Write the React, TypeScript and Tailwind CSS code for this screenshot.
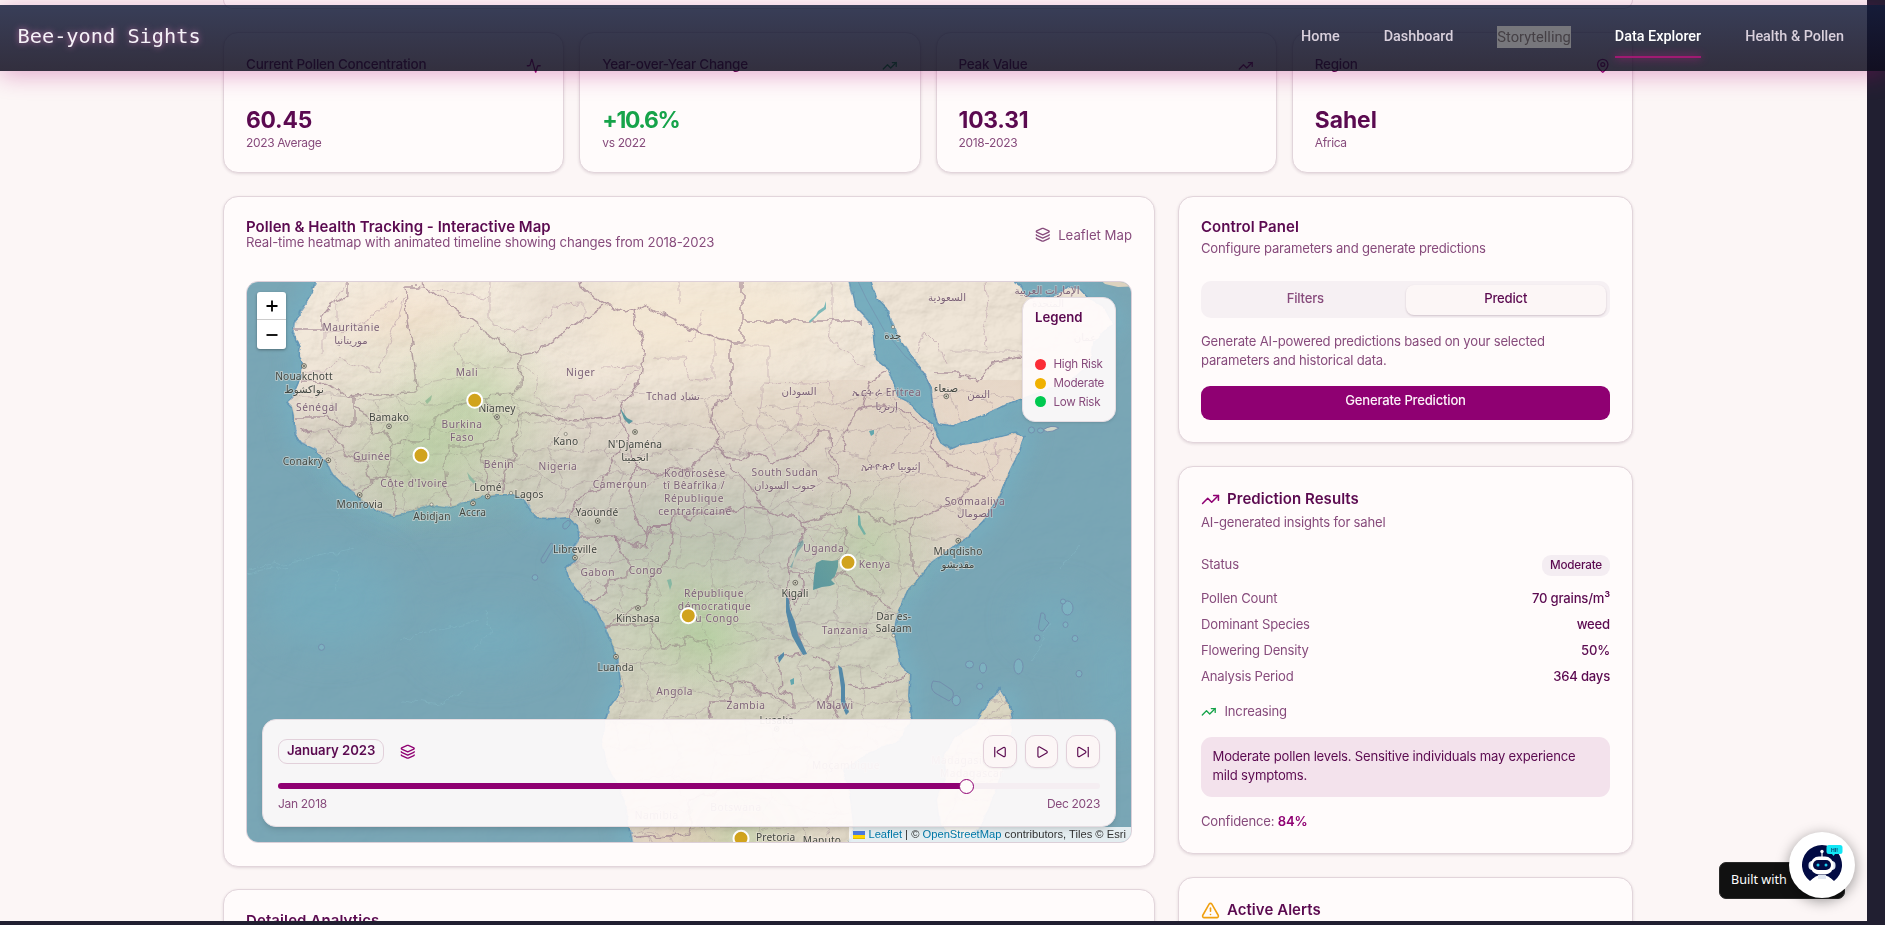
import React from "react";
import { Activity, Layers, MapPin, Play, SkipBack, SkipForward, TrendingUp, TriangleAlert } from "lucide-react";

type Pt = [number, number];
const poly = (s: string): string => "M" + s.trim().split(/\s+/).join("L");

const AFRICA = poly(
  "316,270 316,282 313,292 307,302 300,312 300,316 294,323 293,332 297,338 301,347 300,355 303,363 302,373 299,383 295,392 292,398 288,402 293,407 295,417 295,425 296,435 302,443 315,449 320,455 327,462 332,473 345,485 360,498 377,510 394,516 412,510 430,505 447,507 462,503 480,496 497,494 513,494 523,498 531,510 537,517 552,518 568,517 578,525 580,538 574,547 577,560 566,569 572,583 583,597 597,610 603,622 605,628 613,643 618,660 620,673 622,687 618,697 610,707 607,717 602,740 608,767 620,787 627,810 630,830 634,850 846,850 853,825 850,800 843,770 870,752 900,740 911,718 908,697 909,675 900,665 897,647 893,633 898,610 907,590 918,578 930,563 950,548 967,537 983,520 998,497 1008,473 1018,453 1023,437 1015,434 993,439 977,443 963,445 950,450 940,443 935,433 933,425 922,418 907,402 897,397 893,383 888,370 875,360 873,340 872,325 863,315 855,307 853,297 846,270"
);
const ARABIA = poly(
  "868,270 872,282 877,297 887,307 892,323 900,338 913,357 923,370 932,387 933,403 938,423 953,425 967,420 987,413 1007,403 1022,398 1045,390 1067,383 1090,363 1093,343 1112,323 1103,307 1087,298 1078,288 1068,287 1058,295 1042,299 1028,297 1022,292 1019,286 1014,282 1014,270"
);
const MADAGASCAR = poly(
  "1000,690 1005,698 1010,710 1012,720 1010,745 1001,773 990,805 980,827 965,838 950,835 940,823 937,800 947,777 944,755 955,738 975,725 983,713 988,703"
);

const BORDERS: string[] = [
  "293,329 321,329 321,317 331,305 347,296 347,275",
  "421,287 404,287 417,393 377,394 353,395 348,398 335,388 320,382 301,382",
  "418,281 450,305 503,343 510,355 521,355 537,352 570,329 603,305 590,294 582,287 580,275",
  "603,305 614,308 625,314 635,311 637,327 644,342 641,380 630,394 620,407 618,417 597,420 573,422 553,418 533,413 520,415 513,440 515,455 505,470 504,494",
  "521,355 520,387 515,395 487,397 463,403 433,418 428,437 420,443 393,442 384,430 374,434 364,412 353,406 353,395",
  "487,397 492,410 503,428 497,440 480,445 447,445 445,463 447,485 450,505",
  "480,445 484,465 486,480 487,496",
  "635,311 645,305 672,319 700,333 731,345 731,392 715,403 712,423 720,445 727,458 740,458 752,452 765,457 773,462 793,455 808,448 820,432 829,432 830,453 838,462 838,472 828,478",
  "742,275 742,344 731,344",
  "742,321 863,321",
  "885,372 870,380 863,407 857,410 847,430 842,453",
  "863,407 880,405 897,407 920,420 930,430",
  "933,433 932,445 947,465 985,477 957,502 913,519 912,527 912,570 918,578",
  "913,519 890,524 868,514 858,512 850,505 848,490 828,478",
  "727,458 715,445 690,468 668,470 650,476 636,465 625,430 618,417",
  "620,445 608,470 600,490 580,495 568,517",
  "636,465 629,500 636,520 648,535",
  "648,539 650,525 673,525 676,513 690,518 720,512 745,507 765,508 778,515 793,515 802,523 838,513 850,505",
  "728,465 747,483 757,500 765,508",
  "673,525 668,560 650,581 647,603 637,608 620,618 605,625",
  "580,538 615,538 627,558 627,577 607,580 607,590 593,603",
  "615,540 647,547 653,525 673,525",
  "605,625 652,625 663,648 682,647 683,637 708,640 709,657 713,680 732,683 747,682 763,695 780,697 793,707 793,695 780,690 778,657 803,653",
  "802,523 803,540 790,557 787,595 792,620 806,655",
  "800,573 813,573 840,573 877,597 893,610",
  "845,528 848,548 838,560",
  "847,685 867,688 890,684 909,673",
  "732,683 732,702 709,702 710,720",
  "813,656 833,667 828,700 840,718",
  "787,595 795,603 803,590 800,573 790,573",
  "295,418 325,418 340,425 353,428 353,406",
  "315,430 297,432",
  "330,430 345,455 365,462 372,480 360,497",
  "388,475 394,495 394,516",
  "372,480 388,475 392,442",
  "935,373 960,373 977,380 993,362 1022,357",
  "602,840 690,833 690,800 720,790",
];

const MINOR: string[] = [
  "347,282 336,300 336,320",
  "400,297 350,330 323,331 323,355",
  "404,300 378,375 340,358 323,372 300,372",
  "490,282 490,325 530,332 560,305 583,304 583,325",
  "474,325 453,345 465,365 500,368 516,366",
  "421,287 490,298",
  "465,378 440,382 415,386",
  "521,362 538,378 535,395 548,410",
  "603,367 640,366 602,398 580,396 560,412",
  "653,358 684,358 690,378 712,380",
  "680,282 680,303",
  "683,345 695,340 702,310",
  "742,345 768,345 768,382 762,384 762,400",
  "832,282 832,321 830,340 845,352 865,370",
  "762,382 810,383 830,380 832,400 850,410",
  "714,378 714,340",
  "986,282 988,310 983,330 987,350",
  "917,350 925,330 940,345 945,362",
  "950,352 1022,352",
  "762,400 757,430 770,445 775,455",
  "800,400 797,430 808,445",
  "997,442 998,462 985,477",
  "803,530 815,526 828,524 845,530",
  "808,535 818,545 812,558 798,560",
  "828,524 826,540 834,552",
];

function rng(seed: number) {
  let s = seed;
  return () => {
    s = (s * 16807) % 2147483647;
    return s / 2147483647;
  };
}

function districtMesh(): string {
  const r = rng(42);
  const cw = 31;
  const ch = 27;
  const cols = 27;
  const rows = 20;
  const p: Pt[][] = [];
  for (let y = 0; y < rows; y++) {
    const row: Pt[] = [];
    for (let x = 0; x < cols; x++) {
      row.push([270 + x * cw + (y % 2) * 15 + (r() - 0.5) * 20, 400 + y * ch + (r() - 0.5) * 17]);
    }
    p.push(row);
  }
  let d = "";
  for (let y = 0; y < rows - 1; y++) {
    for (let x = 0; x < cols - 1; x++) {
      const [ax, ay] = p[y][x];
      const [bx, by] = p[y][x + 1];
      const [cx, cy] = p[y + 1][x];
      if (r() > 0.15) d += `M${ax.toFixed(1)},${ay.toFixed(1)}L${bx.toFixed(1)},${by.toFixed(1)}`;
      if (r() > 0.2) d += `M${ax.toFixed(1)},${ay.toFixed(1)}L${cx.toFixed(1)},${cy.toFixed(1)}`;
    }
  }
  return d;
}
const MESH = districtMesh();

const COUNTRIES: [string, number, number][] = [
  ["Mauritanie", 351.3, 327], ["موريتانيا", 351, 340], ["Mali", 467, 372], ["Niger", 580.7, 372],
  ["Sénégal", 317, 407], ["Burkina", 462, 424.5], ["Faso", 462, 437], ["Guinée", 371.7, 456], ["Bénin", 499, 464],
  ["Nigeria", 558, 466.7], ["Côte d'Ivoire", 414, 483], ["Cameroun", 620, 484], ["Tchad تشاد", 673, 396],
  ["Kodorosêse", 695, 473], ["tî Bêafrîka /", 694, 485.7], ["République", 694, 498.5], ["centrafricaine", 695, 511],
  ["السعودية", 947, 297], ["السودان", 799, 391], ["ኤርትራ Eritrea", 886.7, 392.7], ["إرتريا", 886.7, 406],
  ["اليمن", 978.7, 394], ["الإمارات العربية", 1047, 290], ["المتحدة", 1048, 303], ["عمان", 1085, 337],
  ["South Sudan", 785, 472.5], ["جنوب السودان", 785, 485.7], ["ኢትዮጵያ إثيوبيا", 890.7, 466], ["Soomaaliya", 975, 501],
  ["الصومال", 975, 513.5], ["Gabon", 597.7, 572.5], ["Congo", 645.7, 570.5], ["Angola", 674.7, 691], ["Namibia", 656.7, 815],
  ["Uganda", 823.7, 548.5], ["Kenya", 874.7, 564.5], ["Tanzania", 845, 630.5], ["Zambia", 746, 705], ["Malawi", 835, 705],
  ["Moçambique", 846, 765], ["Madagasikara /", 972, 760], ["Madagascar", 972, 773], ["Botswana", 736, 807],
  ["République", 714, 593.5], ["démocratique", 714.6, 606], ["du Congo", 714, 618.5],
];
const CITIES: [string, number, number][] = [
  ["Nouakchott", 304, 376], ["نواكشوط", 304, 389], ["Bamako", 389, 417.5], ["Niamey", 497, 408], ["Kano", 565.7, 441],
  ["N'Djaména", 635, 444.5], ["انجمينا", 635, 457], ["Conakry", 303, 461], ["Lomé", 488, 487.5], ["Lagos", 529, 494],
  ["Monrovia", 359.7, 504.5], ["Abidjan", 432, 516], ["Accra", 472.7, 512.5], ["Yaoundé", 597, 512], ["جدة", 892.7, 335],
  ["صنعاء", 946, 388], ["Libreville", 575, 549], ["Kinshasa", 638, 618], ["Luanda", 615.7, 667], ["Muqdisho", 958, 551],
  ["مقديشو", 958, 564], ["Kigali", 795, 593.5], ["Dar es-", 893.7, 616], ["Salaam", 893.7, 628.5], ["Lusaka", 776.7, 720],
  ["Pretoria", 775.7, 837.5], ["Maputo", 822, 840],
];
const CAPITALS: Pt[] = [
  [304, 366], [389, 426.3], [497, 417], [635, 432], [328.3, 460.3], [487.7, 496.5], [359.7, 495], [473, 503.3], [597.7, 521],
  [946.3, 396.3], [575, 557.7], [638, 608], [616, 656.7], [958.3, 540.7], [795.3, 582.7], [776.7, 729],
];
const TOWNS: Pt[] = [[565.7, 434], [511, 493], [431.5, 504.5], [893, 327], [893.5, 635.5]];
const MARKERS: Pt[] = [[474.7, 400.3], [421, 455.3], [688.3, 615.7], [848, 562.3], [741, 838.3]];
const ISLANDS: [number, number, number, number][] = [
  [535, 577.5, 2.8, 2.8], [321.5, 647.3, 3, 3], [969.5, 664.5, 4, 3.5], [983, 668, 3.5, 5], [1018.5, 666.5, 4.5, 7.5],
  [979.7, 686.3, 3, 3], [1067.5, 608, 5.5, 7], [1063, 601.5, 2.5, 2.5], [1065.5, 624.7, 2.5, 2.8], [1037.3, 638, 2.8, 3],
  [1075, 638.5, 2.8, 3], [1079, 673.7, 3, 3.3], [956.3, 700.5, 4, 5], [1031.5, 430, 3, 3], [1040.5, 430.5, 3, 2.5],
];

function MapCanvas() {
  return (
    <svg viewBox="247 282 884 560" className="block h-full w-full" preserveAspectRatio="none">
      <defs>
        <linearGradient id="sand" x1="0" y1="282" x2="0" y2="842" gradientUnits="userSpaceOnUse">
          <stop offset="0" stopColor="#f0e3d0" />
          <stop offset="0.17" stopColor="#eadcc9" />
          <stop offset="0.25" stopColor="#d6cab8" />
          <stop offset="0.36" stopColor="#c3beab" />
          <stop offset="0.48" stopColor="#b9bba8" />
          <stop offset="0.66" stopColor="#c2c3aa" />
          <stop offset="0.8" stopColor="#c9c5ac" />
          <stop offset="1" stopColor="#d5c9b2" />
        </linearGradient>
        <linearGradient id="east" x1="800" y1="560" x2="960" y2="430" gradientUnits="userSpaceOnUse">
          <stop offset="0" stopColor="#dacbb9" stopOpacity="0" />
          <stop offset="1" stopColor="#e2d1c0" stopOpacity="0.95" />
        </linearGradient>
        <radialGradient id="heat">
          <stop offset="0" stopColor="#9ccc86" stopOpacity="0.34" />
          <stop offset="0.5" stopColor="#a8cc90" stopOpacity="0.17" />
          <stop offset="1" stopColor="#aecb9a" stopOpacity="0" />
        </radialGradient>
        <filter id="jag" x="-5%" y="-5%" width="110%" height="110%">
          <feTurbulence type="fractalNoise" baseFrequency="0.075" numOctaves="3" seed="7" result="n" />
          <feDisplacementMap in="SourceGraphic" in2="n" scale="11" xChannelSelector="R" yChannelSelector="G" />
        </filter>
        <filter id="coast" x="-5%" y="-5%" width="110%" height="110%">
          <feTurbulence type="fractalNoise" baseFrequency="0.11" numOctaves="3" seed="3" result="n" />
          <feDisplacementMap in="SourceGraphic" in2="n" scale="5" xChannelSelector="R" yChannelSelector="G" />
        </filter>
        <filter id="relief" x="0" y="0" width="100%" height="100%">
          <feTurbulence type="fractalNoise" baseFrequency="0.022 0.03" numOctaves="5" seed="11" />
          <feDiffuseLighting surfaceScale="5" diffuseConstant="1.1" lightingColor="#ffffff">
            <feDistantLight azimuth="225" elevation="55" />
          </feDiffuseLighting>
        </filter>
        <filter id="soft12" x="-20%" y="-20%" width="140%" height="140%"><feGaussianBlur stdDeviation="9" /></filter>
        <filter id="soft30" x="-50%" y="-50%" width="200%" height="200%"><feGaussianBlur stdDeviation="18" /></filter>
        <clipPath id="land">
          <path d={AFRICA + "Z"} />
          <path d={ARABIA + "Z"} />
          <path d={MADAGASCAR + "Z"} />
        </clipPath>
      </defs>

      <rect x="247" y="282" width="884" height="560" fill="#74a2b2" />
      <g filter="url(#soft12)" fill="none" stroke="#6fb0c4" strokeWidth="24" opacity="0.5">
        <path d={AFRICA} />
        <path d={ARABIA} />
        <path d={MADAGASCAR} />
      </g>
      <g filter="url(#soft30)" fill="#70abbe" opacity="0.6">
        <ellipse cx="330" cy="600" rx="70" ry="50" />
        <ellipse cx="490" cy="640" rx="60" ry="30" />
        <ellipse cx="1115" cy="680" rx="20" ry="60" />
        <ellipse cx="1055" cy="620" rx="35" ry="25" />
      </g>
      <rect x="247" y="282" width="884" height="560" filter="url(#relief)" opacity="0.1" className="mix-blend-soft-light" />

      <g filter="url(#coast)">
        <g fill="none" stroke="#5c8fb4" strokeWidth="3.2" opacity="0.7">
          <path d={AFRICA + "Z"} />
          <path d={ARABIA + "Z"} />
          <path d={MADAGASCAR + "Z"} />
        </g>
        <g fill="url(#sand)">
          <path d={AFRICA + "Z"} />
          <path d={ARABIA + "Z"} fill="#e9dcc8" />
          <path d={MADAGASCAR + "Z"} fill="#cdc6ab" />
        </g>
      </g>
      <path d="M1095,275L1105,284L1118,287L1140,286L1140,275Z" fill="#dcd2bf" />

      <g clipPath="url(#land)">
        <rect x="800" y="380" width="240" height="230" fill="url(#east)" />
        <g filter="url(#soft30)">
          <ellipse cx="700" cy="320" rx="120" ry="40" fill="#f3e4cc" opacity="0.8" />
          <ellipse cx="560" cy="300" rx="45" ry="22" fill="#dbcfbd" opacity="0.7" />
          <ellipse cx="410" cy="320" rx="60" ry="22" fill="#f2dcc4" opacity="0.8" />
          <ellipse cx="760" cy="412" rx="80" ry="22" fill="#e0d0bc" opacity="0.7" />
          <ellipse cx="690" cy="535" rx="90" ry="40" fill="#b3b9a6" opacity="0.7" />
          <ellipse cx="890" cy="420" rx="40" ry="30" fill="#d2c5b4" opacity="0.6" />
          <ellipse cx="690" cy="842" rx="50" ry="20" fill="#dfbfa3" opacity="0.6" />
        </g>
        <rect x="247" y="282" width="884" height="560" filter="url(#relief)" opacity="0.28" className="mix-blend-soft-light" />
        <g filter="url(#jag)" fill="none">
          <path d={MESH} stroke="#a18995" strokeWidth="0.8" opacity="0.5" />
          {MINOR.map((b, i) => (
            <path key={i} d={poly(b)} stroke="#b99aa8" strokeWidth="0.8" opacity="0.7" />
          ))}
          {BORDERS.map((b, i) => (
            <path key={i} d={poly(b)} stroke="#9f8090" strokeWidth="1.4" opacity="0.75" />
          ))}
        </g>
      </g>

      <g fill="#5b979f">
        <path d="M816,563L822,560L832,561L838,560L838,567L835,576L831,580L835,584L830,586L822,587L816,589L813,590L814,576Z" />
        <path d="M786,594L789,600L790,610L795,622L798,635L803,645L807,654L803,655L797,645L792,636L789,625L786,612Z" fill="#5489a8" />
        <path d="M838,665L842,668L845,685L845,700L849,712L846,715L841,703L841,688Z" fill="#5489a8" />
        <path d="M858,515L860,516L861,525L866,534L864,535L858,525Z" fill="#63a7ae" />
        <path d="M778,657L784,652L784,656L779,663Z" fill="#5489a8" />
        <path d="M620,408L627,418L633,421L629,424L624,419Z" />
        <path d="M809,321L816,315L818,311L824,307L826,301L826,309L819,314L810,323Z" fill="#7db9b8" />
        <path d="M869,431L874,430L874,434L871,436Z" fill="#63a7ae" />
        <path d="M425,401L432,395L431,400L427,404Z" fill="#93b6a0" />
        <path d="M467,472L472,478L476,482L474,484L469,479Z" fill="#86b3aa" />
        <path d="M792,568L798,543L803,540L804,544L798,552L790,567Z" opacity="0.6" />
        <path d="M667,580L671,579L672,584L670,590Z" fill="#7fb2a8" />
        <path d="M790,680L794,678L794,684L791,685Z" fill="#63a7ae" />
      </g>

      <g fill="none" stroke="#6f83a8" strokeWidth="0.9" opacity="0.8">
        {ISLANDS.map(([x, y, rx, ry], i) => (
          <ellipse key={i} cx={x} cy={y} rx={rx} ry={ry} fill="#7fb5c4" />
        ))}
        <path d="M568,520q4,2 1,6t-5,3t-1,-5z" />
        <path d="M551,543q4,1 2,5l-8,14q-4,3 -4,-3z" />
        <path d="M940,682l12,8q4,6 -3,11l-14,-8q-6,-5 -2,-12z" />
        <path d="M1041,613q5,-1 4,6l4,4l-6,8q-6,0 -4,-7z" />
        <path d="M1043,430q8,-6 16,-2l-6,3q-6,2 -10,-1z" fill="#e6e1cf" />
        <path d="M855,275L867,300L884,330L905,356L924,372L930,388L936,420" opacity="0.6" />
      </g>
      <g stroke="#8cc0cd" strokeWidth="0.8" fill="none" opacity="0.45" filter="url(#jag)">
        <path d="M247,570L300,560L355,550" />
        <path d="M247,574L290,566" />
        <path d="M400,640L440,630L480,620M475,650L490,630L486,610" />
        <path d="M400,700L440,705L465,690" />
        <path d="M1060,570L1080,545M1030,660L1045,640L1050,620" />
        <path d="M335,570L338,590" />
      </g>

      <ellipse cx="447" cy="428" rx="150" ry="130" fill="url(#heat)" opacity="0.7" />
      <circle cx="474.7" cy="400.3" r="85" fill="url(#heat)" />
      <circle cx="421" cy="455.3" r="80" fill="url(#heat)" />
      <circle cx="688.3" cy="615.7" r="95" fill="url(#heat)" />
      <circle cx="710" cy="640" r="60" fill="url(#heat)" />
      <circle cx="870" cy="545" r="75" fill="url(#heat)" />
      <circle cx="741" cy="838.3" r="75" fill="url(#heat)" />

      <g textAnchor="middle" fontFamily="'Noto Sans','DejaVu Sans',sans-serif" fontSize="10.2">
        {COUNTRIES.map(([t, x, y], i) => (
          <text key={i} x={x} y={y + 3.6} fill="#7d6379" letterSpacing={/[a-z]/.test(t) ? 0.55 : 0} stroke="#efe6dc" strokeOpacity="0.4" strokeWidth="1.6" paintOrder="stroke">
            {t}
          </text>
        ))}
        {CITIES.map(([t, x, y], i) => (
          <text key={i} x={x} y={y + 3.6} fill="#434843" letterSpacing={/[a-z]/.test(t) ? 0.15 : 0} stroke="#efe6dc" strokeOpacity="0.5" strokeWidth="1.8" paintOrder="stroke">
            {t}
          </text>
        ))}
      </g>
      {CAPITALS.map(([x, y], i) => (
        <g key={i}>
          <circle cx={x} cy={y} r="2.4" fill="#d9d6c6" stroke="#55564c" strokeWidth="0.8" />
          <circle cx={x} cy={y} r="0.9" fill="#55564c" />
        </g>
      ))}
      {TOWNS.map(([x, y], i) => (
        <circle key={i} cx={x} cy={y} r="1.6" fill="#e9e5d9" stroke="#77766c" strokeWidth="0.7" />
      ))}
      {MARKERS.map(([x, y], i) => (
        <circle key={i} cx={x} cy={y} r="7.5" fill="#d1a31d" stroke="#fff" strokeWidth="2" />
      ))}
    </svg>
  );
}

const card = "border border-[#e2d5db] bg-[#fffbfb] shadow-[0_1px_3px_rgba(60,20,50,0.14)] rounded-[15px]";

function StatCard({ title, value, note, tone, icon }: { title: string; value: string; note: string; tone: string; icon: React.ReactNode }) {
  return (
    <div className={`${card} h-[141px] flex-1 px-[22px] pt-[21px]`}>
      <div className="flex h-[20px] items-center justify-between text-[13.5px] font-medium tracking-[-0.26px] text-[#5b0a50]">
        <span>{title}</span>
        {icon}
      </div>
      <div className={`mt-[32px] text-[22.8px] leading-[28px] font-bold ${tone}`}>{value}</div>
      <div className="text-[12px] leading-[17px] tracking-[-0.35px] text-[#874b7c]">{note}</div>
    </div>
  );
}

function Row({ label, value }: { label: string; value: string }) {
  return (
    <div className="flex h-[26px] items-center justify-between">
      <span>{label}</span>
      <span className="font-medium text-[#5b0a50]">{value}</span>
    </div>
  );
}

function MapCard() {
  return (
    <section className={`${card} h-[671px] px-[22px] pt-[22px]`}>
      <div className="flex h-[62px] items-start justify-between">
        <div>
          <h2 className="text-[15px] leading-[15px] font-semibold tracking-[0.02px] text-[#5b0a50]">Pollen &amp; Health Tracking - Interactive Map</h2>
          <p className="text-[13.2px] leading-[17px] tracking-[-0.14px] text-[#874b7c]">Real-time heatmap with animated timeline showing changes from 2018-2023</p>
        </div>
        <div className="mt-[6px] flex items-center gap-[8px] text-[13.2px] leading-[20px] text-[#874b7c]">
          <Layers size={15.5} />
          <span>Leaflet Map</span>
        </div>
      </div>
      <div className="relative h-[562px] w-[886px] overflow-hidden rounded-[12px] border border-[#dccfd8]">
        <MapCanvas />
        <div className="absolute top-[10px] left-[10px] flex w-[29px] flex-col rounded-[3px] bg-white text-black shadow-[0_1px_3px_rgba(0,0,0,0.35)]">
          <button className="flex h-[28px] items-center justify-center border-b border-[#ccc]">
            <svg width="12" height="12" viewBox="0 0 12 12"><path d="M6 0.5V11.5M0.5 6H11.5" stroke="#000" strokeWidth="1.8" /></svg>
          </button>
          <button className="flex h-[29px] items-center justify-center">
            <svg width="12" height="12" viewBox="0 0 12 12"><path d="M0.5 6H11.5" stroke="#000" strokeWidth="1.8" /></svg>
          </button>
        </div>
        <div className="absolute top-[15px] right-[15px] h-[125px] w-[94px] rounded-[13px] border border-[#e6dde2] bg-[#fffbfb]/94 px-[12px] pt-[9px] shadow-sm">
          <div className="mb-[28px] text-[13.2px] leading-[20px] font-semibold text-[#5b0a50]">Legend</div>
          <div className="flex flex-col text-[11.6px] leading-[18.8px] tracking-[-0.25px] whitespace-nowrap text-[#874b7c]">
            <div className="flex items-center gap-[7.5px]"><span className="size-[11px] shrink-0 rounded-full bg-[#fb2c36]" />High Risk</div>
            <div className="flex items-center gap-[7.5px]"><span className="size-[11px] shrink-0 rounded-full bg-[#f0b100]" />Moderate</div>
            <div className="flex items-center gap-[7.5px]"><span className="size-[11px] shrink-0 rounded-full bg-[#00c950]" />Low Risk</div>
          </div>
        </div>
        <div className="absolute right-0 bottom-0 flex h-[15px] items-center bg-white/80 pr-[5px] pl-[4px] font-['Liberation_Sans',sans-serif] text-[11.2px] whitespace-pre text-[#333]">
          <svg width="12" height="8" viewBox="0 0 12 8" className="mr-[3.5px]"><path fill="#4C7BE1" d="M0 0h12v4H0z" /><path fill="#FFD500" d="M0 4h12v3H0z" /><path fill="#E0BC00" d="M0 7h12v1H0z" /></svg>
          <span className="text-[#0078a8]">Leaflet</span> | © <span className="text-[#0078a8]">OpenStreetMap</span> contributors, Tiles © Esri
        </div>
        <div className="absolute right-[15px] bottom-[15px] left-[15px] h-[108px] rounded-[14px] border border-[#e6dde2] bg-[#fffbfb]/94 px-[15px] pt-[15px] shadow-md">
          <div className="flex h-[33px] items-center">
            <span className="flex h-[25px] items-center rounded-[9px] border border-[#e2d0da] px-[8px] pb-px text-[13.2px] font-semibold tracking-[-0.06px] text-[#5b0a50]">January 2023</span>
            <Layers size={15.5} className="ml-[16px] text-[#8f0072]" />
            <div className="ml-auto flex gap-[8px] text-[#5b0a50]">
              <button className="flex h-[33px] w-[34px] items-center justify-center rounded-[10px] border border-[#e2d0da] bg-[#fcf6f6] shadow-xs"><SkipBack size={14} /></button>
              <button className="flex h-[33px] w-[33px] items-center justify-center rounded-[10px] border border-[#e2d0da] bg-[#fcf6f6] shadow-xs"><Play size={14} /></button>
              <button className="flex h-[33px] w-[34px] items-center justify-center rounded-[10px] border border-[#e2d0da] bg-[#fcf6f6] shadow-xs"><SkipForward size={14} /></button>
            </div>
          </div>
          <div className="mt-[15px] flex h-[6px] items-center rounded-full bg-[#f5eef2]">
            <div className="h-[6px] w-[682px] rounded-l-full bg-[#8f0072]" />
            <div className="-ml-[1px] size-[15px] rounded-full border border-[#8f0072] bg-[#fffbfb]" />
          </div>
          <div className="mt-[6px] flex justify-between text-[12px] leading-[17px] tracking-[-0.3px] text-[#874b7c]">
            <span>Jan 2018</span>
            <span>Dec 2023</span>
          </div>
        </div>
      </div>
    </section>
  );
}

function Sidebar() {
  return (
    <div className="flex w-[455px] shrink-0 flex-col gap-[23px] text-[13.1px] tracking-[-0.2px] text-[#874b7c]">
      <section className={`${card} h-[247px] shrink-0 px-[22px] pt-[21px]`}>
        <h2 className="text-[15px] leading-[17px] font-semibold tracking-[0.05px] text-[#5b0a50]">Control Panel</h2>
        <p className="mt-[3px] leading-[20px]">Configure parameters and generate predictions</p>
        <div className="mt-[23px] flex h-[37px] rounded-[10px] bg-[#f6f0f3] p-[4px] pb-[3px] font-medium">
          <button className="flex flex-1 items-center justify-center pb-[3px] text-[#874b7c]">Filters</button>
          <button className="flex flex-1 items-center justify-center rounded-[8px] bg-[#fcf6f6] pb-[3px] text-[#5b0a50] shadow-[0_1px_2px_rgba(60,20,50,0.2)]">Predict</button>
        </div>
        <p className="mt-[14px] leading-[19.3px]">Generate AI-powered predictions based on your selected<br />parameters and historical data.</p>
        <button className="mt-[15px] flex h-[34px] w-full items-center justify-center rounded-[9px] bg-[#8f0072] pb-[3px] font-medium text-[#fdf2f9]">Generate Prediction</button>
      </section>

      <section className={`${card} h-[388px] shrink-0 px-[22px] pt-[21px]`}>
        <h2 className="flex items-center gap-[7px] text-[15px] leading-[22px] font-semibold tracking-[0.05px] text-[#5b0a50]">
          <TrendingUp size={19} className="text-[#8f0072]" />
          Prediction Results
        </h2>
        <p className="mt-[2px] leading-[20px]">AI-generated insights for sahel</p>
        <div className="mt-[22px] mb-[10px] flex h-[22px] items-center justify-between">
          <span className="pb-px">Status</span>
          <span className="rounded-[9px] bg-[#f4edf2] px-[8px] text-[11.7px] leading-[21px] font-medium text-[#5b0a50]">Moderate</span>
        </div>
        <Row label="Pollen Count" value="70 grains/m³" />
        <Row label="Dominant Species" value="weed" />
        <Row label="Flowering Density" value="50%" />
        <Row label="Analysis Period" value="364 days" />
        <div className="mt-[12px] flex h-[20px] items-center gap-[8px]">
          <TrendingUp size={15.5} className="text-[#16a34a]" />
          Increasing
        </div>
        <div className="mt-[15px] h-[60px] rounded-[11px] bg-[#f3e2ec] px-[11.5px] pt-[10px] leading-[19.3px] whitespace-nowrap text-[#5b0a50]">
          Moderate pollen levels. Sensitive individuals may experience<br />mild symptoms.
        </div>
        <p className="mt-[14px] leading-[20px]">Confidence: <span className="font-semibold text-[#8f0072]">84%</span></p>
      </section>

      <section className={`${card} h-[160px] shrink-0 px-[22px] pt-[21px]`}>
        <h2 className="flex items-center gap-[7px] text-[15px] leading-[22px] font-semibold tracking-[0.05px] text-[#5b0a50]">
          <TriangleAlert size={19} className="text-[#f0a010]" />
          Active Alerts
        </h2>
      </section>
    </div>
  );
}

function NavBar() {
  return (
    <header className="absolute top-[5px] left-0 flex h-[66px] w-full items-center justify-between bg-linear-to-b from-[rgba(19,27,58,0.84)] to-[rgba(15,12,30,0.85)] pr-[41px] pb-[3px] pl-[17.500px] font-['Roboto',sans-serif] shadow-[0_4px_24px_rgba(175,0,115,0.32)]">
      <div className="font-['DejaVu_Sans_Mono',monospace] text-[20.3px] leading-none text-[#f6f2f8] [text-shadow:0_0_6px_rgba(240,130,200,0.75)]">Bee-yond Sights</div>
      <nav className="flex items-center gap-[44px] text-[14.4px] leading-[22px] font-medium text-[#d9d0dc]">
        <a>Home</a>
        <a>Dashboard</a>
        <a className="bg-[#77777c] text-[14.7px] font-normal text-[#454045]">Storytelling</a>
        <a className="relative text-white">
          Data Explorer
          <span className="absolute -bottom-[10px] left-0 h-[2px] w-full bg-[#a01a72] shadow-[0_0_8px_#c01a85]" />
        </a>
        <a>Health &amp; Pollen</a>
      </nav>
    </header>
  );
}

function ChatBot() {
  return (
    <>
      <div className="absolute top-[862px] left-[1719px] flex h-[37px] w-[126px] items-center rounded-[7px] border border-[#2a2a2a] bg-[#111] pl-[11px] font-['Noto_Sans',sans-serif] text-[12.6px] text-white">Built with</div>
      <div className="absolute top-[832px] left-[1789px] flex size-[66px] items-center justify-center rounded-full bg-white shadow-[0_3px_14px_rgba(0,0,0,0.4)]">
        <svg width="42" height="42" viewBox="0 0 42 42">
          <path d="M9 37A20 20 0 1 1 33 37Q28 32 21 32T9 37Z" fill="#020b44" />
          <path d="M10 38Q13 31 21 31T32 38Q27 42 21 42T10 38Z" fill="#fff" />
          <path d="M17 31h8v4h-8z" fill="#dfe6f2" />
          <path d="M21 8v6" stroke="#fff" strokeWidth="1.2" />
          <circle cx="21" cy="7.5" r="1.7" fill="#fff" />
          <rect x="7.5" y="17" width="27" height="9" rx="4" fill="#dfe6f2" />
          <rect x="9.5" y="12.5" width="23" height="18" rx="8.5" fill="#fff" />
          <rect x="12" y="16" width="18" height="10" rx="5" fill="#020b44" />
          <circle cx="17" cy="21" r="1.5" fill="#19c8f0" />
          <circle cx="25" cy="21" r="1.5" fill="#19c8f0" />
          <path d="M28 1h11q2.500 0 2.500 2.500v4q0 2.500 -2.500 2.500h-5l-1.500 2l-1.500 -2h-3q-2.500 0 -2.500 -2.500v-4q0 -2.500 2.500 -2.500z" fill="#12e6f5" />
          <text x="33.5" y="7.5" textAnchor="middle" fontFamily="Inter,sans-serif" fontWeight="700" fontSize="5" fill="#0a3a6a">HI!</text>
        </svg>
      </div>
    </>
  );
}

export default function App() {
  return (
    <div className="relative h-[925px] w-[1885px] overflow-hidden bg-[#211f31] font-['Inter',sans-serif]">
      <div className="h-[921px] w-[1867px] overflow-hidden bg-[#fcf6f6]">
        <div className="ml-[223px] w-[1410px]">
          <div className="h-[9px] rounded-b-[15px] border border-t-0 border-[#e2d5db] bg-[#fffbfb]" />
          <div className="mt-[23px] flex gap-[15px]">
            <StatCard title="Current Pollen Concentration" value="60.45" note="2023 Average" tone="tracking-[-0.2px] text-[#5b0a50]" icon={<Activity size={15.5} className="mt-[3px] text-[#8f0072]" />} />
            <StatCard title="Year-over-Year Change" value="+10.6%" note="vs 2022" tone="tracking-[-1.3px] text-[#16a34a]" icon={<TrendingUp size={15.5} className="mt-[3px] text-[#16a34a]" />} />
            <StatCard title="Peak Value" value="103.31" note="2018-2023" tone="tracking-[-0.2px] text-[#5b0a50]" icon={<TrendingUp size={15.5} className="mt-[3px] text-[#8f0072]" />} />
            <StatCard title="Region" value="Sahel" note="Africa" tone="text-[#5b0a50]" icon={<MapPin size={15.5} className="mt-[3px] text-[#8f0072]" />} />
          </div>
          <div className="mt-[23px] flex gap-[23px]">
            <div className="flex w-[932px] shrink-0 flex-col gap-[22px]">
              <MapCard />
              <section className={`${card} h-[120px] px-[22px] pt-[22px]`}>
                <h2 className="text-[15px] leading-[17px] font-semibold tracking-[0.1px] text-[#5b0a50]">Detailed Analytics</h2>
              </section>
            </div>
            <Sidebar />
          </div>
        </div>
      </div>
      <NavBar />
      <ChatBot />
    </div>
  );
}
